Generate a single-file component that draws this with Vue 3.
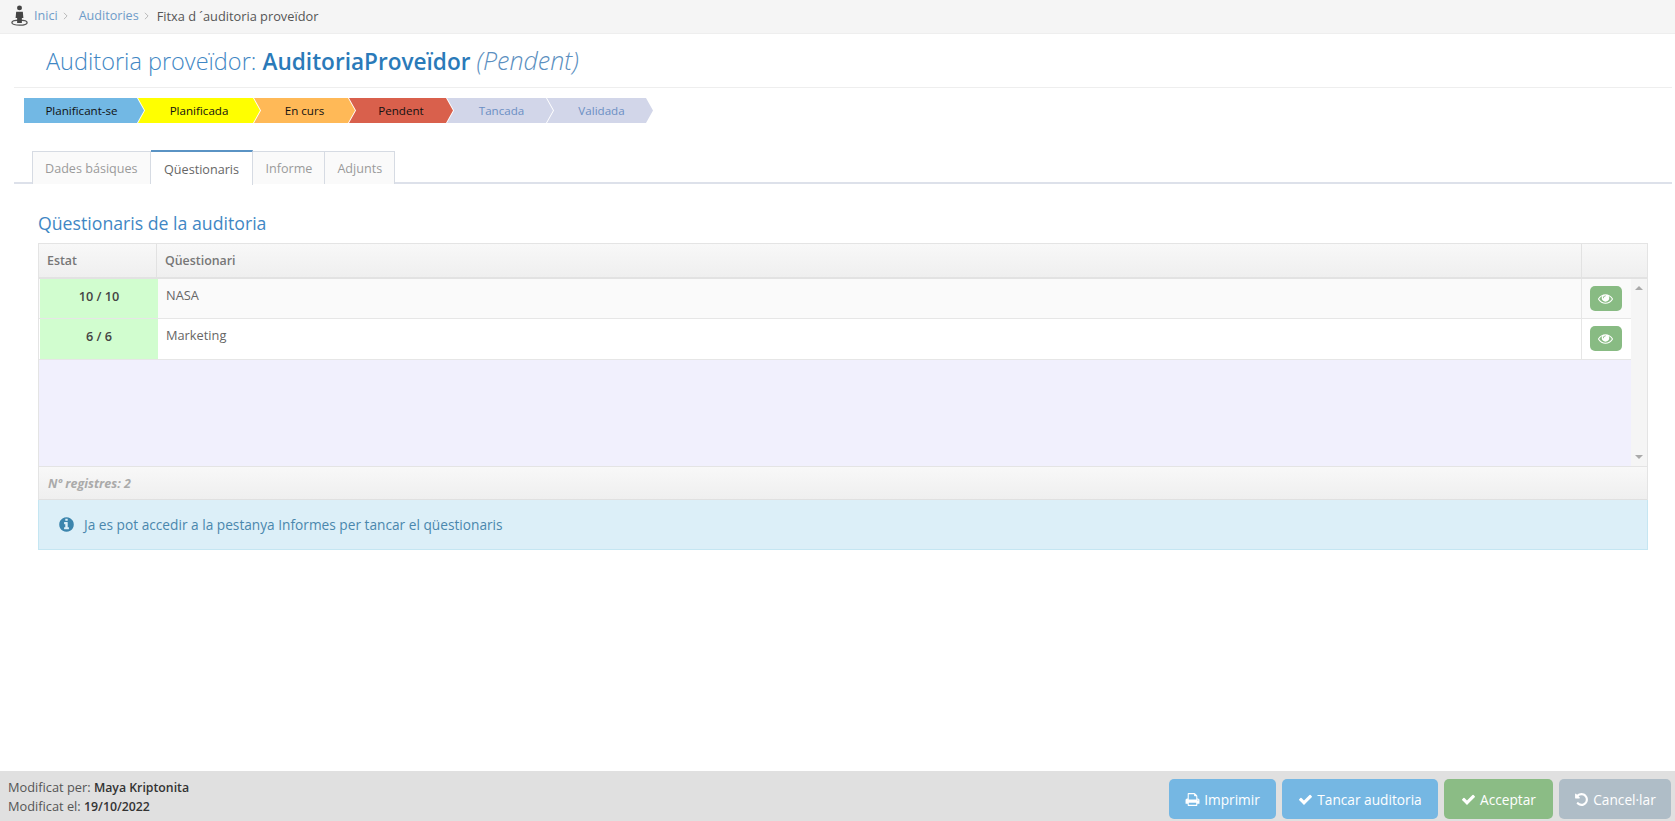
<script setup>
const crumbs = [
  { label: 'Inici', link: true },
  { label: 'Auditories', link: true },
  { label: 'Fitxa d ´auditoria proveïdor', link: false },
]
const steps = [
  { label: 'Planificant-se', cls: 'blue', width: 120 },
  { label: 'Planificada', cls: 'yellow', width: 122 },
  { label: 'En curs', cls: 'orange', width: 101 },
  { label: 'Pendent', cls: 'red', width: 104 },
  { label: 'Tancada', cls: 'todo', width: 106 },
  { label: 'Validada', cls: 'todo', width: 106 },
]
const tabs = ['Dades básiques', 'Qüestionaris', 'Informe', 'Adjunts']
const rows = [
  { state: '10 / 10', name: 'NASA' },
  { state: '6 / 6', name: 'Marketing' },
]
const check = 'M1671 566q0 40-28 68l-724 724-136 136q-28 28-68 28t-68-28l-136-136-362-362q-28-28-28-68t28-68l136-136q28-28 68-28t68 28l294 295 656-657q28-28 68-28t68 28l136 136q28 28 28 68z'
const eye = 'M1664 960q-152-236-381-353 61 104 61 225 0 185-131.500 316.500t-316.500 131.500-316.500-131.500-131.500-316.500q0-121 61-225-229 117-381 353 133 205 333.500 326.500t434.500 121.500 434.500-121.500 333.500-326.500zm-720-384q0-20-14-34t-34-14q-125 0-214.500 89.500t-89.500 214.500q0 20 14 34t34 14 34-14 14-34q0-86 61-147t147-61q20 0 34-14t14-34zm848 384q0 34-20 69-140 230-376.500 368.500t-499.500 138.500-499.500-139-376.500-368q-20-35-20-69t20-69q140-229 376.500-368t499.500-139 499.500 139 376.500 368q20 35 20 69z'
const info = 'M1152 1376v-160q0-14-9-23t-23-9h-96v-512q0-14-9-23t-23-9h-320q-14 0-23 9t-9 23v160q0 14 9 23t23 9h96v320h-96q-14 0-23 9t-9 23v160q0 14 9 23t23 9h448q14 0 23-9t9-23zm-128-896v-160q0-14-9-23t-23-9h-192q-14 0-23 9t-9 23v160q0 14 9 23t23 9h192q14 0 23-9t9-23zm640 416q0 209-103 385.500t-279.500 279.500-385.500 103-385.500-103-279.500-279.500-103-385.500 103-385.500 279.500-279.500 385.500-103 385.500 103 279.500 279.500 103 385.500z'
const print = 'M448 1536h896v-256h-896v256zm0-640h896v-384h-160q-40 0-68-28t-28-68v-160h-640v640zm1152 64q0-26-19-45t-45-19-45 19-19 45 19 45 45 19 45-19 19-45zm128 0v416q0 13-9.500 22.500t-22.500 9.500h-224v160q0 40-28 68t-68 28h-960q-40 0-68-28t-28-68v-160h-224q-13 0-22.500-9.500t-9.500-22.500v-416q0-79 56.500-135.500t135.500-56.500h64v-544q0-40 28-68t68-28h672q40 0 88 20t76 48l152 152q28 28 48 76t20 88v256h64q79 0 135.500 56.500t56.500 135.500z'
const undo = 'M1664 896q0 156-61 298t-164 245-245 164-298 61q-172 0-327-72.500t-264-204.500q-7-10-6.500-22.500t8.500-20.500l137-138q10-9 25-9 16 2 23 12 73 95 179 147t225 52q104 0 198.500-40.500t163.500-109.500 109.500-163.500 40.500-198.500-40.500-198.500-109.500-163.500-163.500-109.500-198.500-40.500q-98 0-188 35.500t-160 101.500l137 138q31 30 14 69-17 40-59 40h-448q-26 0-45-19t-19-45v-448q0-42 40-59 39-17 69 14l130 129q107-101 244.500-156.500t284.500-55.500q156 0 298 61t245 164 164 245 61 298z'
const actions = [
  { label: 'Imprimir', icon: print, cls: 'b-blue', width: 107 },
  { label: 'Tancar auditoria', icon: check, cls: 'b-blue', width: 156 },
  { label: 'Acceptar', icon: check, cls: 'b-green', width: 109 },
  { label: 'Cancel·lar', icon: undo, cls: 'b-grey', width: 112 },
]
</script>

<template>
  <div class="page">
    <nav class="crumbs">
      <svg class="person" viewBox="0 0 20 22" width="19" height="21">
        <ellipse cx="10" cy="18.5" rx="8" ry="2.6" fill="none" stroke="#555" stroke-width="1.4" />
        <circle cx="10" cy="3" r="2.6" fill="#444" />
        <path d="M6.500 7h7l.6 6.500h-1.600V19h-5v-5.500H5.900z" fill="#444" />
      </svg>
      <template v-for="(c, i) in crumbs" :key="c.label">
        <span :class="c.link ? 'crumb-link' : 'crumb-text'">{{ c.label }}</span>
        <svg v-if="i < crumbs.length - 1" class="sep" viewBox="0 0 6 10" width="5" height="8">
          <path d="M1 1l4 4-4 4" fill="none" stroke="#aaa" stroke-width="1" />
        </svg>
      </template>
    </nav>

    <main class="main">
      <h1 class="title">Auditoria proveïdor: <b>AuditoriaProveïdor</b> <i>(Pendent)</i></h1>

      <div class="steps">
        <div
          v-for="s in steps"
          :key="s.label"
          class="step"
          :class="s.cls"
          :style="{ width: s.width + 'px' }"
        >{{ s.label }}</div>
      </div>

      <div class="tabs">
        <div v-for="(t, i) in tabs" :key="t" class="tab" :class="{ active: i === 1 }">{{ t }}</div>
      </div>

      <section class="content">
        <h2 class="heading">Qüestionaris de la auditoria</h2>

        <div class="grid">
          <div class="grid-head">
            <div class="c-state">Estat</div>
            <div class="c-name">Qüestionari</div>
            <div class="c-action"></div>
          </div>
          <div class="grid-body">
            <div class="rows">
              <div v-for="(r, i) in rows" :key="r.name" class="row" :class="{ odd: i === 0 }">
                <div class="c-state state-cell">{{ r.state }}</div>
                <div class="c-name name-cell">{{ r.name }}</div>
                <div class="c-action action-cell">
                  <button class="eye-btn">
                    <svg viewBox="0 0 1792 1792" width="15" height="15"><path :d="eye" fill="#fff" /></svg>
                  </button>
                </div>
              </div>
            </div>
            <div class="scroll">
              <span class="arrow up"></span>
              <span class="arrow down"></span>
            </div>
          </div>
          <div class="grid-foot">Nº registres: 2</div>
        </div>

        <div class="alert">
          <svg viewBox="0 0 1792 1792" width="17" height="17"><path :d="info" fill="#3c85ad" /></svg>
          <span>Ja es pot accedir a la pestanya Informes per tancar el qüestionaris</span>
        </div>
      </section>
    </main>

    <footer class="bottom">
      <div class="meta">
        <div>Modificat per: <strong>Maya Kriptonita</strong></div>
        <div>Modificat el: <strong>19/10/2022</strong></div>
      </div>
      <div class="actions">
        <button
          v-for="a in actions"
          :key="a.label"
          class="action"
          :class="a.cls"
          :style="{ width: a.width + 'px' }"
        >
          <svg viewBox="0 0 1792 1792" width="15" height="15"><path :d="a.icon" fill="#fff" /></svg>
          {{ a.label }}
        </button>
      </div>
    </footer>
  </div>
</template>

<style>
html, body { margin: 0; background: #fff; }
</style>

<style scoped>
* { box-sizing: border-box; }
.page {
  width: 1675px;
  height: 821px;
  display: flex;
  flex-direction: column;
  font-family: "Open Sans", "Liberation Sans", sans-serif;
  color: #555;
  overflow: hidden;
}
.crumbs {
  height: 34px;
  flex: none;
  display: flex;
  align-items: center;
  gap: 5px;
  padding: 0 0 2px 10px;
  background: #f5f5f5;
  border-bottom: 1px solid #eee;
  font-size: 12.600px;
}
.person { margin-right: 0; }
.crumb-link { color: #6f9cc9; }
.crumb-text { color: #555; margin-left: -3px; font-size: 12.800px; }
.sep { margin: 0 6px 0 0; }
.main { flex: 1; min-height: 0; padding: 0 0 0 14px; }
.title {
  margin: 0 3px 0 0;
  height: 54px;
  padding: 9px 0 0 32px;
  font-size: 23.500px;
  line-height: 34px;
  font-weight: 300;
  color: #3f87c4;
  border-bottom: 1px solid #eee;
}
.title b { font-size: 22.600px; font-weight: 600; color: #2a7ab9; }
.title i { font-size: 25px; font-weight: 300; color: #5b8fc0; }
.steps { display: flex; margin: 10px 0 0 10px; height: 25px; }
.step {
  height: 25px;
  margin-left: -6px;
  display: flex;
  align-items: center;
  justify-content: center;
  font-size: 11.600px;
  color: #111;
  clip-path: polygon(0 0, calc(100% - 7px) 0, 100% 50%, calc(100% - 7px) 100%, 0 100%, 7px 50%);
}
.step:first-child { margin-left: 0; padding-right: 5px; clip-path: polygon(0 0, calc(100% - 7px) 0, 100% 50%, calc(100% - 7px) 100%, 0 100%); }
.blue { background: #72b8e4; }
.yellow { background: #ffff00; }
.orange { background: #ffb957; }
.red { background: #d9604c; }
.todo { background: #d2d6e9; color: #6b8fc4; padding-left: 3px; }
.tabs {
  display: flex;
  margin: 28px 3px 0 0;
  padding-left: 18px;
  height: 33px;
  border-bottom: 2px solid #dde1ea;
}
.tab {
  height: 33px;
  padding: 8px 12px 0;
  font-size: 12.600px;
  line-height: 17px;
  color: #9a9a9a;
  background: #fafafa;
  border: 1px solid #d6dbe3;
  border-left-width: 0;
  border-bottom: none;
}
.tab:first-child { border-left-width: 1px; }
.tab.active {
  height: 35px;
  margin-top: -1px;
  padding: 9px 13.500px 0;
  color: #666;
  background: #fff;
  border-top: 2px solid #5a93c4;
  position: relative;
}
.content { padding-left: 24px; margin-top: 28px; width: 1634px; }
.heading {
  margin: 0 0 9px;
  font-size: 17.700px;
  line-height: 22px;
  font-weight: 400;
  color: #3f87c4;
}
.grid { border: 1px solid #e4e4e4; border-bottom: none; }
.grid-head {
  display: flex;
  height: 35px;
  background: linear-gradient(#f8f8f8, #efefef);
  border-bottom: 2px solid #e2e2e2;
  font-size: 12.400px;
  font-weight: 600;
  color: #777;
}
.grid-head > div { display: flex; align-items: center; }
.c-state { flex: none; }
.c-name { flex: 1; }
.c-action { width: 50px; flex: none; }
.grid-head .c-state { padding-left: 8px; width: 117px; }
.grid-head .c-name { padding-left: 8px; border-left: 1px solid #e2e2e2; }
.grid-head .c-action { width: 66px; border-left: 1px solid #e2e2e2; }
.grid-body { display: flex; height: 187px; }
.rows { flex: 1; background: #f1f0fd; }
.row { display: flex; height: 41px; background: #fff; border-bottom: 1px solid #e6e6e6; }
.row.odd { height: 40px; background: #fafafa; }
.state-cell {
  width: 118px;
  margin-left: 1px;
  background: #d1fdcf;
  padding-top: 8px;
  text-align: center;
  font-size: 12.700px;
  font-weight: 600;
  color: #444;
}
.name-cell { padding: 8px 0 0 8px; font-size: 12.800px; line-height: 17px; color: #666; }
.action-cell { display: flex; justify-content: center; padding: 7px 2px 0 0; border-left: 1px solid #e6e6e6; }
.eye-btn {
  width: 32px;
  height: 25px;
  padding: 0;
  display: flex;
  align-items: center;
  justify-content: center;
  background: #88bb83;
  border: none;
  border-radius: 5px;
}
.scroll {
  width: 16px;
  flex: none;
  display: flex;
  flex-direction: column;
  justify-content: space-between;
  align-items: center;
  padding: 7px 0;
  background: #f5f5f5;
}
.arrow { width: 0; height: 0; border-left: 4px solid transparent; border-right: 4px solid transparent; }
.arrow.up { border-bottom: 4px solid #aaa; }
.arrow.down { border-top: 4px solid #aaa; }
.grid-foot {
  height: 34px;
  padding: 0 0 0 9px;
  display: flex;
  align-items: center;
  background: linear-gradient(#f8f8f8, #efefef);
  border-top: 1px solid #e4e4e4;
  border-bottom: 1px solid #e0e0e0;
  font-size: 12.500px;
  font-weight: 700;
  font-style: italic;
  color: #aaa;
}
.alert {
  height: 50px;
  display: flex;
  align-items: center;
  gap: 9px;
  padding-left: 19px;
  background: #dceff8;
  border: 1px solid #c5e6f2;
  border-top: none;
  font-size: 13.700px;
  color: #4a87ad;
}
.bottom {
  height: 50px;
  flex: none;
  display: flex;
  justify-content: space-between;
  background: #e0e0e0;
}
.meta { padding: 7px 0 0 8px; font-size: 12.800px; line-height: 19px; color: #555; }
.meta strong { font-size: 12.300px; font-weight: 600; color: #333; }
.actions { display: flex; gap: 6px; padding: 8px 4px 2px 0; }
.action {
  height: 40px;
  display: flex;
  align-items: center;
  justify-content: center;
  gap: 4px;
  border: none;
  border-radius: 5px;
  padding: 0;
  color: #fff;
  font-family: inherit;
  font-size: 13.700px;
}
.b-blue { background: #75b7e3; }
.b-green { background: #8bbc85; }
.b-grey { background: #afbdc7; }
</style>
